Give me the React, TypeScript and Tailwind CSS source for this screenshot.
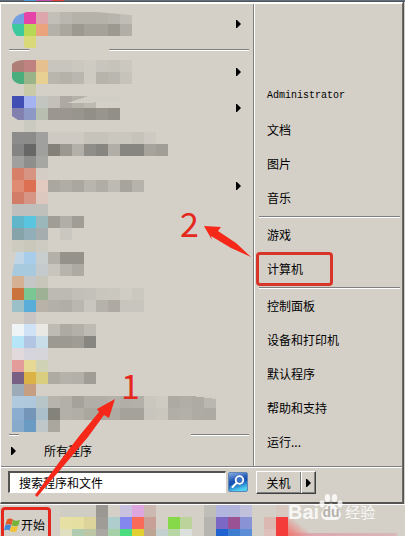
import { useId } from 'react';
import clsx from 'clsx';

const CELL = 12;

interface MosaicProps {
  rows: string[];
  clip?: string;
  smear?: string;
}

interface Program extends MosaicProps {
  label: string;
  arrow?: 'top' | 'middle';
}

// each row is a list of hex colours, "-" leaves the cell empty
const Mosaic = ({ rows, clip, smear }: MosaicProps) => {
  const id = useId();
  const cells = rows.map((row) => row.split(' '));
  const width = Math.max(...cells.map((row) => row.length)) * CELL;

  return (
    <svg width={width} height={rows.length * CELL} shapeRendering="crispEdges" className="block shrink-0" aria-hidden="true">
      {clip && (
        <clipPath id={id}>
          <path d={clip} />
        </clipPath>
      )}
      <g clipPath={clip ? `url(#${id})` : undefined}>
        {cells.map((row, y) =>
          row.map((color, x) =>
            color === '-' ? null : (
              <rect key={`${x}-${y}`} x={x * CELL} y={y * CELL} width={CELL} height={CELL} fill={`#${color}`} />
            )
          )
        )}
      </g>
      {smear && <path d={smear} fill="#d1cec5" />}
    </svg>
  );
};

const PINNED: Program = {
  label: 'Program 1',
  arrow: 'top',
  rows: [
    '739fe0 e643a8 dda5ac c2bfb8 bab7b0 b5b2aa b5b2aa b5b2aa b8b5ae c0bdb6',
    '3bc99d b5d957 eba37e b4b1aa aaa79f 9c9991 a5a29a a5a29a 9c9991 b1aea7',
    '- dad97a'
  ],
  clip: 'M12 1Q18 -2 24 0H84L120 3V24H24V36H13L9 27Q0 22 0 13Q1 3 12 1Z'
};

const PROGRAMS: Program[] = [
  {
    label: 'Program 2',
    arrow: 'top',
    rows: [
      'ae7f76 bf8280 e6c08f c8c5be c8c5be cbc8c0 cecbc3 c8c5be c6c3bb cbc8c0',
      '4aad7c 9bb388 e8cf92 b9b6ae b5b2aa bab7b0 cecbc3 b7b4ac bab7b0 c6c3bb',
      '- c9cba8'
    ],
    clip: 'M0 4Q4 0 13 0H120V24H24V36H12V24H8Q2 23 0 18Z'
  },
  {
    label: 'Program 3',
    arrow: 'top',
    rows: [
      '414fb5 a5b3f0 c3c6c0 c3c0b9 aeaaa3 b5b2aa bdbab2 - -',
      '8180ae 8d99c4 b9bfb0 9b9790 9b9790 98958e 928f88 98958e 928f88',
      '- cbcac0'
    ],
    clip: 'M0 0H108V24H24V36H12V24H6L0 20Z',
    smear: 'M55 7L76 0H108V6Z'
  },
  {
    label: 'Program 4',
    rows: [
      '8c8c8c 8c8c8b a0a09e cecac3 cecac3 cecac3 c6c3bb c6c3bb cac7bf cac7bf c6c3bb cecac3',
      '848484 676767 a0a09f 84817b 9b9891 b3b0a9 908e88 888681 b1aea7 888680 888680 a6a39c a19e97',
      'a0a09e 8e8e8c a6a6a3'
    ]
  },
  {
    label: 'Program 5',
    arrow: 'middle',
    rows: [
      'd77f69 d79482 d4cdc5',
      'df8b74 dd7052 e3cac0 aaa7a0 b0ada6 aaa7a0 b8b5ae b0ada6 bdbab3 a7a49d b6b3ac',
      'd27d68 d79685 dcc8be'
    ]
  },
  {
    label: 'Program 6',
    rows: [
      'bfc0bd bfc0bd bfc0bb',
      '62b6ca 5ac5de 9bb7ba a09d96 b1aea7 a09d96',
      '86a3aa 92aeb8 a5adae - cac7c0',
      'cdcac0 c9c8ba cecbc3'
    ]
  },
  {
    label: 'Program 7',
    rows: ['c0d5e6 a8cdea c8cdce b3b0a9 95928c 95928c', 'a8cade a8cadf c5cbcc c8c5be b7b4ad acaaa3'],
    clip: 'M4 0H72V24H0Z'
  },
  {
    label: 'Program 8',
    rows: [
      'd6b092 c4c7c6 c8c5bb',
      'cb733d 7bc794 9fb194 bdbab3 bdbab3 c2bfb8 c4c1ba c9c6be cac7bf d0cdc5 cbc8c0',
      '9bc0c8 59add9 b8b2a9 b3b0a9 b1aea7 bab7b0 c9c6bf b5b2ab aeaaa3 c8c5be c8c5be',
      '- c8c5c4'
    ]
  },
  {
    label: 'Program 9',
    rows: [
      'eff4f7 cfe2f6 e9e8e3 bebbb4 adaaa3 b3b0a9 bebbb4',
      'b5e5f6 b2c5e2 c8dde7 9c9992 9c9992 9f9c95 888681',
      'e2d9dc d6d5dd d6d5da'
    ]
  },
  {
    label: 'Program 10',
    rows: [
      'e39c9a e6d995 d0d2b5',
      '786085 dab246 d9cd7f aeaba2 b5b2ab b3b0a9 a09d96',
      '9cabb7 c69f83'
    ]
  },
  {
    label: 'Program 11',
    rows: [
      'b0c9dc b0c8dc b8c5c8 b7b4ad b3b0a9 a5a29b b1aea7 b1aea7 b5b2ab b1aea7 b3b0a9 cac7bf cecbc3 acaaa3 b1aea7 aeaba4 bab7b0',
      '8aadd0 7595b8 aabfc9 84837b b3b0a9 b1aea7 aaa79f aaa79f aeaba4 a5a29b a5a29b c8c5be cac7bf b1aea7 b3b0a9 aeaba4 acaaa3',
      '87aacb 6a9bc2 c0c7c8 aaa79f'
    ],
    smear: 'M180 0L204 3V0Z'
  }
];

const TASKBAR = [
  'd0cdc5 d0cdc5 d0cdc5 9b9893 - c8c2e0 dda6de cbb8b0 - - - - c0beb9 b2b4e0 b2b4dc c0c0dd - - d8c8c0',
  'e6e0a5 e6dfa2 ddd49b 9f9c97 aecdcc 8487ee fa6a58 c9a098 - 86da4a bcd39c - b7b5b0 7a68c4 9a5294 8a92d6 - dcb8b2 f43c3a',
  'e0dfc0 b0cbb0 bdc6a5 aaa7a2 a6d0a8 4bdc80 e2cf32 bda594 c4d0d0 b8d6a4 dce0dc - b7b5b0 2062d0 3d7dd0 5c8ed8 - e0c0ba f43c3a'
];

const PLACES = [
  ['Administrator', '文档', '图片', '音乐'],
  ['游戏', '计算机'],
  ['控制面板', '设备和打印机', '默认程序', '帮助和支持', '运行...']
];

const Caret = ({ className }: { className?: string }) => (
  <svg viewBox="0 0 5 8" className={clsx('h-2 w-[5px] shrink-0', className)} aria-hidden="true">
    <path d="M0 0H1L5 4L1 8H0Z" fill="#000" />
  </svg>
);

const Separator = ({ className }: { className?: string }) => (
  <div className={clsx('h-[2px] border-t border-[#808080] bg-white', className)} />
);

const ProgramRow = ({ label, arrow, ...mosaic }: Program) => (
  <li>
    <button
      aria-label={label}
      className={clsx('flex w-full justify-between pr-3 pl-[9px]', arrow === 'middle' ? 'items-center' : 'items-start')}
    >
      <Mosaic {...mosaic} />
      {arrow && <Caret className={arrow === 'top' ? 'mt-2' : undefined} />}
    </button>
  </li>
);

const WindowsFlag = () => (
  <svg viewBox="0 0 16 16" className="h-4 w-4 shrink-0" aria-hidden="true">
    <path d="M3 2.500Q6 0.500 9 2.500L7.500 8Q4.500 6.500 1.300 8Z" fill="#e2582a" />
    <path d="M9.200 2.800Q12 4.500 16 2.800L14.300 8.500Q11 10 7.700 8.300Z" fill="#74b43a" />
    <path d="M1.200 8.300Q4.500 6.800 7.200 8.500L5.500 13.500Q3 12 0 13.500Z" fill="#4386d4" />
    <path d="M7.500 8.800Q10.500 10.500 14 9L12.500 14.300Q9 15.800 5.800 14Z" fill="#f4c230" />
  </svg>
);

const SearchIcon = () => (
  <svg viewBox="0 0 20 20" className="h-5 w-5" aria-hidden="true">
    <defs>
      <linearGradient id="glass" x1="0" y1="0" x2="0.300" y2="1">
        <stop offset="0" stopColor="#8fb6e6" />
        <stop offset="0.450" stopColor="#2458b4" />
        <stop offset="0.600" stopColor="#1450b4" />
        <stop offset="1" stopColor="#4cd0f0" />
      </linearGradient>
    </defs>
    <rect x="0.500" y="0.500" width="19" height="19" rx="1.500" fill="url(#glass)" stroke="#5f86b4" />
    <circle cx="11.500" cy="8" r="3.800" fill="#3c72c4" stroke="#fff" strokeWidth="1.800" />
    <path d="M8.500 11L4.500 15" stroke="#fff" strokeWidth="2.200" strokeLinecap="round" />
  </svg>
);

const Watermark = () => (
  <div className="pointer-events-none absolute bottom-3 left-[288px] flex items-end text-white/80">
    <span className="font-['Liberation_Sans',sans-serif] text-xl leading-6 font-bold">Bai</span>
    <span className="relative mb-1 flex h-6 w-6 items-end justify-center">
      <svg viewBox="0 0 24 26" className="absolute inset-x-0 bottom-0 h-[26px] w-6" fill="#fff" fillOpacity="0.800" aria-hidden="true">
        <ellipse cx="3" cy="10" rx="2.500" ry="3.500" />
        <ellipse cx="8.500" cy="4" rx="2.700" ry="4" />
        <ellipse cx="15.500" cy="4" rx="2.700" ry="4" />
        <ellipse cx="21" cy="10" rx="2.500" ry="3.500" />
        <path d="M12 9.500Q15 9.500 17 13Q22 17 22 21Q21 26 16 26H8Q3 26 2 21Q2 17 7 13Q9 9.500 12 9.500Z" />
      </svg>
      <span className="relative font-['Liberation_Sans',sans-serif] text-sm leading-4 font-bold text-[#b5b1ab]">du</span>
    </span>
    <span className="pl-[2px] text-[15px] leading-6">经验</span>
  </div>
);

const Annotations = () => (
  <div className="pointer-events-none absolute inset-0 text-[34px] leading-8 text-[#e5281e]">
    <svg width="405" height="536" className="absolute top-0 left-0" fill="#f5281a" aria-hidden="true">
      <path d="M37 497L35 495L60 461L80 435L99 412L97 409L115 399L109 418L104 415L88 437L66 463Z" />
      <path d="M251 257L231 248L211 236L212 240L204 226L221 227L218 231L236 243Z" />
    </svg>
    <span className="absolute top-[369px] left-[121px]">1</span>
    <span className="absolute top-[207px] left-[180px]">2</span>
  </div>
);

const App = () => (
  <div className="relative flex h-screen flex-col overflow-hidden bg-[#d4d0c8] font-['Noto_Sans_CJK_SC',sans-serif] text-xs text-black">
    <div className="flex h-[2px] shrink-0 bg-[#5c7085]">
      <span className="ml-6 w-3 bg-[#4f9ad8]" />
      <span className="w-4 bg-[#c050b0]" />
      <span className="w-3 bg-[#e04040]" />
    </div>

    <main className="mr-[2px] shrink-0 border-t-2 border-r border-b-2 border-l border-t-white border-r-[#6e6c68] border-b-[#55534f] border-l-white outline outline-[#55534f]">
      <div className="flex">
        <section className="flex flex-1 flex-col border-r border-[#808080] pt-2 pl-[2px]">
          <ul>
            <ProgramRow {...PINNED} />
          </ul>
          <div className="flex justify-between pt-[1px] pr-1 pb-[9px] pl-[6px]">
            <Separator className="w-5" />
            <Separator className="w-[140px]" />
          </div>
          <ul>
            {PROGRAMS.map((program) => (
              <ProgramRow key={program.label} {...program} />
            ))}
          </ul>
          <div className="flex justify-between pt-[2px] pr-1 pl-[6px]">
            <Separator className="w-[10px]" />
            <Separator className="w-[58px]" />
          </div>
          <button className="flex flex-1 items-center gap-7 pl-2 text-left">
            <Caret />
            所有程序
          </button>
        </section>

        <nav className="w-[148px] border-l border-white pt-[75px] pb-[7px]">
          {PLACES.map((group, index) => (
            <div key={group[0]}>
              {index > 0 && <Separator className="mt-px mr-[2px] ml-1" />}
              {group.map((place) => (
                <button
                  key={place}
                  className={clsx(
                    'flex h-[34px] items-center text-left',
                    place === 'Administrator' && "font-['Liberation_Mono',monospace] text-[10px]",
                    place === '计算机' ? 'ml-px w-[77px] rounded-sm border-3 border-[#d8352a] pl-2' : 'w-full pl-3'
                  )}
                >
                  {place}
                </button>
              ))}
            </div>
          ))}
        </nav>
      </div>

      <div className="flex h-9 items-start border-t border-[#808080] pt-1 pl-[7px] shadow-[inset_0_1px_0_#fff]">
        <input
          aria-label="搜索程序和文件"
          defaultValue="搜索程序和文件"
          className="h-[22px] min-w-0 flex-1 border border-t-2 border-l-2 border-white border-t-[#55534f] border-l-[#55534f] bg-white pl-[9px] outline-none"
        />
        <button aria-label="搜索" className="ml-[2px] pt-px">
          <SearchIcon />
        </button>
        <div className="mr-[86px] ml-2 flex h-[23px] border border-white border-r-[#404040] border-b-[#404040] shadow-[inset_-1px_-1px_0_#808080]">
          <button className="w-11 border-r border-[#808080]">关机</button>
          <button aria-label="更多" className="flex w-[14px] items-center justify-center border-l border-white">
            <Caret />
          </button>
        </div>
      </div>
    </main>

    <footer className="flex min-h-0 flex-1 overflow-hidden border-t border-white">
      <button className="mt-[2px] ml-px flex h-9 w-[50px] items-center gap-px rounded-sm border-3 border-[#e5281e]">
        <WindowsFlag />
        <span className="whitespace-nowrap">开始</span>
      </button>
      <div className="ml-[9px]">
        <Mosaic rows={TASKBAR} />
      </div>
      <div className="mt-3 mr-2 flex flex-1 flex-col">
        <div className="h-4 w-5 bg-linear-to-tr from-[#f07a76] to-transparent to-60%" />
        <div className="flex-1 bg-linear-to-r from-[#ee7874] via-[#dca8ae] via-20% to-[#d8b8b8]" />
      </div>
    </footer>

    <Watermark />
    <Annotations />
  </div>
);

export default App;
